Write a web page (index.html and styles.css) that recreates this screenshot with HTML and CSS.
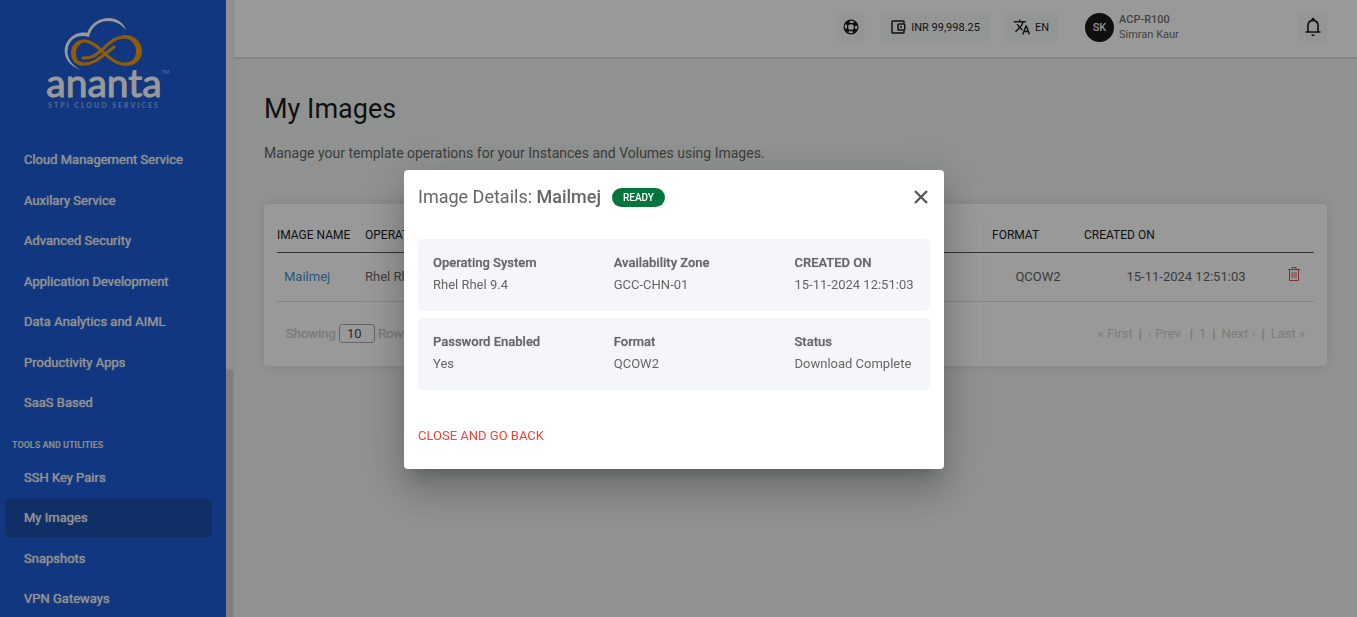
FILE: index.html
```html
<!DOCTYPE html>
<html lang="en">
<head>
<meta charset="utf-8">
<title>My Images</title>
<link rel="stylesheet" href="styles.css">
</head>
<body>
<div class="app">
  <aside class="sidebar">
    <div class="sidebar-body">
      <a class="logo" href="#" aria-label="Ananta STPI Cloud Services">
        <svg class="logo-mark" viewBox="0 0 80 54" width="80" height="54" aria-hidden="true">
          <path d="M17 52C5 48 -1 39 1 29C4 19 13 13 23 15C27 5 36 0 45 0C53 0 60 5 62 12C57 6 51 3 44 3C35 3 27 9 25 19C15 16 6 20 4 30C2 39 7 47 17 52Z" fill="#fff"/>
          <path d="M19 40C28 41 33 36 39 31C46 24 52 19 60 19C70 19 76 25 76 33C76 41 70 46 60 46C51 46 42 37 36 31C30 26 26 23 20 23C13 23 9 29 9 35C9 42 14 46 20 46C31 46 38 38 50 29" fill="none" stroke="#f39a0c" stroke-width="3" stroke-linecap="round"/>
          <path d="M58 17C70 16 78 24 78 33C78 42 71 49 58 48C67 45 72 41 72 33C72 26 67 20 58 20ZM20 22C12 22 7 28 7 35C7 42 12 48 20 48C15 45 12 41 12 35C12 30 15 26 20 24Z" fill="#f39a0c"/>
        </svg>
        <span class="logo-name">ananta<sup class="logo-tm">TM</sup></span>
        <span class="logo-tag">STPI CLOUD SERVICES</span>
      </a>
      <nav>
        <ul class="menu">
          <li><a href="#">Cloud Management Service</a></li>
          <li><a href="#">Auxilary Service</a></li>
          <li><a href="#">Advanced Security</a></li>
          <li><a href="#">Application Development</a></li>
          <li><a href="#">Data Analytics and AIML</a></li>
          <li><a href="#">Productivity Apps</a></li>
          <li><a href="#">SaaS Based</a></li>
        </ul>
        <h2 class="menu-title">TOOLS AND UTILITIES</h2>
        <ul class="menu">
          <li><a href="#">SSH Key Pairs</a></li>
          <li><a class="active" href="#" aria-current="page">My Images</a></li>
          <li><a href="#">Snapshots</a></li>
          <li><a href="#">VPN Gateways</a></li>
        </ul>
      </nav>
    </div>
    <div class="scroll-track"><div class="scroll-thumb"></div></div>
  </aside>

  <div class="page">
    <header class="topbar">
      <button class="chip chip-icon" aria-label="Support">
        <svg viewBox="0 0 16 16" width="16" height="16" fill="none" stroke="currentColor"><circle cx="8" cy="8" r="6.900" stroke-width="1.300"/><circle cx="8" cy="8" r="3.500" stroke-width="1.300"/><circle cx="8" cy="8" r="5.200" stroke-width="3.400" stroke-dasharray="4.200 3.970" stroke-dashoffset="-1.980"/></svg>
      </button>
      <button class="chip">
        <svg viewBox="0 0 24 24" width="18" height="18" fill="none" stroke="currentColor" stroke-width="2"><path d="M20 7V5a1 1 0 0 0-1-1H5a1 1 0 0 0-1 1v14a1 1 0 0 0 1 1h14a1 1 0 0 0 1-1v-2"/><rect x="12" y="8" width="9" height="8" rx="1"/><circle cx="16" cy="12" r="1" fill="currentColor" stroke-width="1"/></svg>
        <span>INR 99,998.25</span>
      </button>
      <button class="chip">
        <svg viewBox="0 0 24 24" width="18" height="18"><path fill="currentColor" d="m12.870 15.070-2.540-2.510.030-.030A17.520 17.520 0 0 0 14.070 6H17V4h-7V2H8v2H1v2h11.170C11.500 7.920 10.440 9.750 9 11.350 8.070 10.320 7.300 9.190 6.690 8h-2c.730 1.630 1.730 3.170 2.980 4.560l-5.090 5.020L4 19l5-5 3.110 3.110.760-2.040ZM18.500 10h-2L12 22h2l1.120-3h4.750L21 22h2l-4.500-12Zm-2.620 7 1.620-4.330L19.120 17h-3.240Z"/></svg>
        <span>EN</span>
      </button>
      <div class="user">
        <span class="avatar">SK</span>
        <div><strong>ACP-R100</strong><span>Simran Kaur</span></div>
      </div>
      <button class="chip chip-icon" aria-label="Notifications">
        <svg viewBox="0 0 24 24" width="20" height="20"><path fill="currentColor" d="M5 17V10a7 7 0 0 1 5-6.700V3a2 2 0 0 1 4 0v.3A7 7 0 0 1 19 10v7h2v2H3v-2h2Zm2 0h10v-7a5 5 0 0 0-10 0v7Zm3 4h4a2 2 0 0 1-4 0Z"/></svg>
      </button>
    </header>

    <main class="content">
      <h1>My Images</h1>
      <p class="lead">Manage your template operations for your Instances and Volumes using Images.</p>
      <section class="card">
        <table class="images">
          <colgroup><col class="c-name"><col><col><col class="c-format"><col class="c-date"><col class="c-action"></colgroup>
          <thead>
            <tr><th>IMAGE NAME</th><th>OPERATING SYSTEM</th><th>AVAILABILITY ZONE</th><th>FORMAT</th><th>CREATED ON</th><th></th></tr>
          </thead>
          <tbody>
            <tr>
              <td class="name"><a href="#">Mailmej</a></td><td>Rhel Rhel 9.4</td><td>GCC-CHN-01</td>
              <td class="mid">QCOW2</td><td class="mid">15-11-2024 12:51:03</td>
              <td><button class="trash" aria-label="Delete image"><svg viewBox="0 0 12 14" width="12" height="14" fill="none" stroke="currentColor"><path d="M0 2.500h12M4 2V.500h4V2M1.500 3v10.500h9V3"/><path d="M4 5v6M6 5v6M8 5v6" stroke-width=".8"/></svg></button></td>
            </tr>
          </tbody>
        </table>
        <div class="table-foot">
          <label class="rows">Showing <input type="text" value="10"> Rows</label>
          <div class="pager">
            <button>« First</button><span>|</span><button>‹ Prev</button><span class="wide">|</span><button>1</button><span>|</span><button>Next ›</button><span>|</span><button>Last »</button>
          </div>
        </div>
      </section>
    </main>
  </div>
</div>

<div class="backdrop">
  <div class="modal" role="dialog" aria-modal="true" aria-labelledby="modal-title">
    <div class="modal-head">
      <h2 id="modal-title">Image Details: <strong>Mailmej</strong></h2>
      <span class="badge">READY</span>
      <button class="close" aria-label="Close"><svg viewBox="0 0 14 14" width="14" height="14"><path d="M1 1l12 12M13 1L1 13" stroke="currentColor" stroke-width="2.300"/></svg></button>
    </div>
    <div class="details">
      <dl class="panel">
        <div><dt>Operating System</dt><dd>Rhel Rhel 9.4</dd></div>
        <div><dt>Availability Zone</dt><dd>GCC-CHN-01</dd></div>
        <div><dt>CREATED ON</dt><dd>15-11-2024 12:51:03</dd></div>
      </dl>
      <dl class="panel">
        <div><dt>Password Enabled</dt><dd>Yes</dd></div>
        <div><dt>Format</dt><dd>QCOW2</dd></div>
        <div><dt>Status</dt><dd>Download Complete</dd></div>
      </dl>
    </div>
    <button class="back">CLOSE AND GO BACK</button>
  </div>
</div>
</body>
</html>
```
FILE: styles.css
```css
* { box-sizing: border-box; }

body {
  margin: 0;
  font-family: Roboto, "Liberation Sans", sans-serif;
  font-size: 13px;
  color: #666;
  background: #eff4f1;
  overflow: hidden;
}

button { font: inherit; color: inherit; background: none; border: 0; padding: 0; cursor: pointer; }
a { text-decoration: none; color: inherit; }
h1, h2, p, ul, dl, dd { margin: 0; padding: 0; }
svg { display: block; flex: none; }

.app { display: flex; height: 100vh; }

/* Sidebar */
.sidebar { display: flex; flex: none; overflow: hidden; }
.sidebar-body { width: 226px; background: #1b5dd5; color: #fff; }
.logo { display: flex; flex-direction: column; align-items: center; padding: 18px 18px 0 0; height: 141px; }
.logo-mark { margin-bottom: -8px; }
.logo-name { position: relative; font: 39px/36px Lato, sans-serif; -webkit-text-stroke: 1px #fff; }
.logo-tm { position: absolute; left: 100%; top: 4px; font-size: 5px; line-height: 8px; -webkit-text-stroke: 0; opacity: .6; }
.logo-tag { font: 700 7px/10px Lato, sans-serif; letter-spacing: 2px; opacity: .5; }
.menu { list-style: none; display: flex; flex-direction: column; gap: 3px; padding: 0 14px 0 5px; }
.menu a { display: block; padding: 9px 19px; border-radius: 4px; line-height: 1.5; color: #f3f3f3; text-shadow: 0 0 1px #f3f3f3; }
.menu .active { background: #1a4fab; }
.menu-title { padding: 16px 12px 7px; font-size: 9px; line-height: 14px; color: #e6e6e6; }
.scroll-track { width: 8px; background: #f1f1f1; border-right: 1px solid #e4e4e4; padding-top: 369px; }
.scroll-thumb { height: 100%; background: #d4d4d4; border-radius: 4px 4px 0 0; }

/* Top bar */
.page { flex: 1; min-width: 0; }
.topbar { display: flex; align-items: center; justify-content: flex-end; gap: 15px; height: 59px; padding: 0 30px 3px 0; background: #fff; border-bottom: 2px solid #dcdcdc; color: #1c1c1c; }
.chip { display: flex; align-items: center; gap: 4px; height: 29px; padding: 0 9px; border-radius: 4px; background: #f7faf8; font-size: 11px; }
.chip-icon { width: 28px; padding: 0; justify-content: center; }
.user { display: flex; align-items: center; gap: 5px; width: 214px; margin-left: 12px; margin-right: -15px; font-size: 11px; line-height: 15px; color: #707070; }
.user strong, .user div span { display: block; }
.user strong { font-weight: 500; }
.avatar { display: grid; place-items: center; width: 29px; height: 29px; border-radius: 50%; background: #191919; color: #eee; font-weight: 500; }

/* Content */
.content { padding: 30px; }
h1 { font-size: 27px; line-height: 40px; font-weight: 400; color: #1c1c1c; }
.lead { margin-top: 14px; font-size: 14px; line-height: 20px; }
.card { margin-top: 41px; padding: 14px 13px; background: #fff; border-radius: 4px; box-shadow: 0 0 10px rgba(0, 0, 0, .12); }
.images { width: 100%; table-layout: fixed; border-collapse: collapse; }
.images th, .images td { padding: 0; text-align: left; font-weight: 400; white-space: nowrap; }
.images th { height: 34px; border-bottom: 1px solid #555; font-size: 12px; color: #1c1c1c; }
.images td { height: 49px; border-bottom: 1px solid #ddd; }
.images .name { padding-left: 7px; }
.images .name a { color: #3b95dc; }
.images .mid { text-align: center; }
.c-name { width: 88px; }
.c-format { width: 92px; }
.c-date { width: 204px; }
.c-action { width: 26px; }
.trash { display: block; padding-bottom: 6px; color: #d9534f; }
.table-foot { display: flex; justify-content: space-between; align-items: center; padding: 22px 9px 9px; color: #d0d0d0; text-shadow: 0 0 1px #d0d0d0; }
.rows input { width: 36px; height: 19px; padding: 0 7px; border: 1px solid #aaa; border-radius: 3px; background: #fff; font: inherit; color: #444; }
.pager { display: flex; gap: 6px; }
.pager .wide { margin-left: 3px; }

/* Modal */
.backdrop { position: fixed; inset: 0; display: flex; justify-content: center; align-items: center; padding: 22px 9px 0 0; background: rgba(0, 0, 0, .4); }
.modal { width: 540px; padding: 14px 14px 22px; background: #fff; border-radius: 4px; box-shadow: 0 11px 15px -7px rgba(0, 0, 0, .2), 0 24px 38px 3px rgba(0, 0, 0, .14), 0 9px 46px 8px rgba(0, 0, 0, .12); }
.modal-head { display: flex; align-items: center; gap: 11px; height: 26px; }
.modal-head h2 { font-size: 18px; line-height: 26px; font-weight: 400; }
.modal-head h2 strong { font-weight: 500; }
.badge { padding: 0 11px; border-radius: 10px; background: #04753c; color: #fff; font-size: 10px; line-height: 19px; font-weight: 500; }
.close { margin-left: auto; padding: 2px; color: #555; }
.details { display: grid; gap: 7px; margin-top: 29px; }
.panel { display: grid; grid-template-columns: 3fr 3fr 2fr; padding: 13px 15px 15px; border-radius: 4px; background: #f5f6f9; line-height: 22px; white-space: nowrap; }
.panel dt { font-weight: 500; text-shadow: 0 0 1px #999; }
.back { margin-top: 35px; line-height: 22px; color: #f44336; }
```
